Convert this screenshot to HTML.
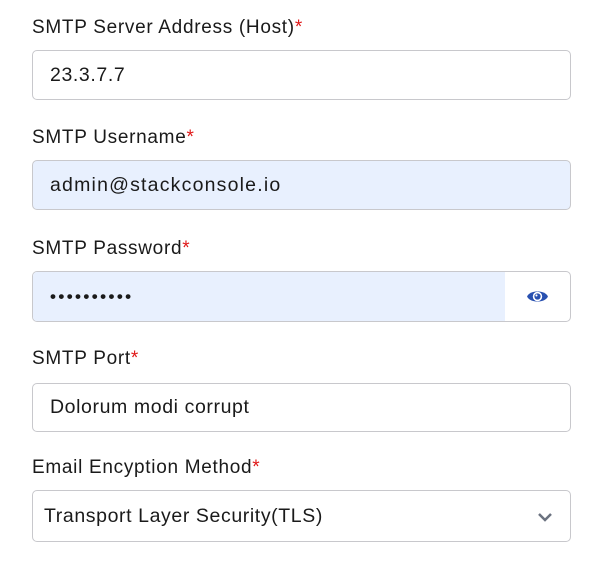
<html><head><style>
body{margin:0;background:#fff;font-family:"Liberation Sans",sans-serif;color:#1a1a1a;width:605px;height:563px;position:relative;overflow:hidden}
.l{position:absolute;left:32px;font-size:19px;line-height:22px;letter-spacing:0.7px}
.l b{color:#e01818;font-weight:normal}
.i{position:absolute;left:32px;width:539px;border:1px solid #c8c8cc;border-radius:5px;box-sizing:border-box;font-size:19.5px;letter-spacing:0.6px;padding-left:17px;display:flex;align-items:center;overflow:hidden}
</style></head><body>
<div class="l" style="top:17px">SMTP Server Address (Host)<b>*</b></div>
<div class="i" style="top:50px;height:50px">23.3.7.7</div>
<div class="l" style="top:127px">SMTP Username<b>*</b></div>
<div class="i" style="top:160px;height:50px;background:#e8f0fe;letter-spacing:1.2px">admin@stackconsole.io</div>
<div class="l" style="top:238px">SMTP Password<b>*</b></div>
<div class="i" style="top:271px;height:51px;padding:0">
<div style="width:472px;height:100%;background:#e8f0fe;display:flex;align-items:center;padding-left:17px;box-sizing:border-box;font-size:17px;letter-spacing:2.4px;font-weight:bold">••••••••••</div>
<div style="flex:1;display:flex;justify-content:center;align-items:center"><svg width="23" height="17" viewBox="0 0 22 16"><path d="M1 8C4 1.5 18 1.5 21 8C18 14.5 4 14.5 1 8Z" fill="#2850b0"/><circle cx="11" cy="8" r="4.5" fill="#fff"/><circle cx="11" cy="8" r="3" fill="#2850b0"/><circle cx="10" cy="7" r="1" fill="#fff"/></svg></div></div>
<div class="l" style="top:348px">SMTP Port<b>*</b></div>
<div class="i" style="top:383px;height:49px">Dolorum modi corrupt</div>
<div class="l" style="top:457px">Email Encyption Method<b>*</b></div>
<div class="i" style="top:490px;height:52px;padding-left:11px">Transport Layer Security(TLS)
<svg style="position:absolute;right:17px;top:21px" width="16" height="10" viewBox="0 0 16 10"><path d="M2 2L8 8L14 2" stroke="#6b7280" stroke-width="2.5" fill="none"/></svg></div>
</body></html>
